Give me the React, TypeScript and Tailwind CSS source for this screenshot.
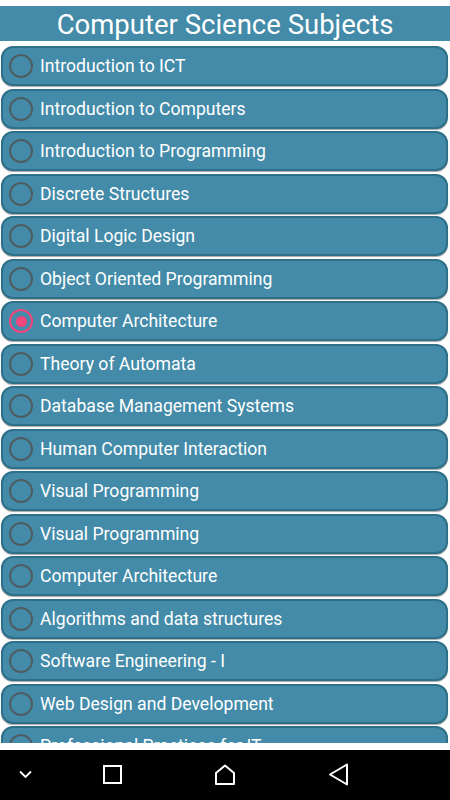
import { useState } from "react";

const subjects = [
  "Introduction to ICT",
  "Introduction to Computers",
  "Introduction to Programming",
  "Discrete Structures",
  "Digital Logic Design",
  "Object Oriented Programming",
  "Computer Architecture",
  "Theory of Automata",
  "Database Management Systems",
  "Human Computer Interaction",
  "Visual Programming",
  "Visual Programming",
  "Computer Architecture",
  "Algorithms and data structures",
  "Software Engineering - I",
  "Web Design and Development",
  "Professional Practices for IT",
];

function Radio({ checked }: { checked: boolean }) {
  return (
    <div
      className={`w-[24px] h-[24px] rounded-full border-2 flex items-center justify-center shrink-0 ${
        checked ? "border-[#f2467c]" : "border-[#4e5d62]"
      }`}
    >
      {checked && <div className="w-[11px] h-[11px] rounded-full bg-[#f2467c]" />}
    </div>
  );
}

export default function App() {
  const [selected, setSelected] = useState(6);

  return (
    <div className="w-[450px] h-[800px] bg-white flex flex-col overflow-hidden font-['Roboto',sans-serif]">
      {/* Title bar */}
      <div className="mt-[6px] h-[35px] bg-[#438ba8] flex items-center justify-center shrink-0 pt-[3px]">
        <h1 className="text-white text-[27.5px] leading-none">Computer Science Subjects</h1>
      </div>

      {/* Subject list */}
      <div className="flex-1 overflow-hidden pt-[5px] pr-[2px] pl-[1px] mb-[7px]">
        {subjects.map((s, i) => (
          <button
            key={i}
            type="button"
            onClick={() => setSelected(i)}
            className="w-full h-[40px] mb-[2.5px] flex items-center gap-[7px] pl-[6px] bg-[#438ba8] border-2 border-[#2f7089] rounded-[12px] shadow-[0_1px_1px_rgba(0,0,0,0.35)] text-left"
          >
            <Radio checked={selected === i} />
            <span className="text-white text-[17.6px] leading-none mt-[2px]">{s}</span>
          </button>
        ))}
      </div>

      {/* Android nav bar */}
      <div className="h-[50px] bg-black flex items-center shrink-0 relative">
        <svg className="absolute left-[19px] top-[20px]" width="13" height="9" viewBox="0 0 13 9">
          <path d="M1 1.5 L6.5 7 L12 1.5" fill="none" stroke="white" strokeWidth="1.8" />
        </svg>
        <svg className="absolute left-[103px] top-[15px]" width="19" height="19" viewBox="0 0 19 19">
          <rect x="1" y="1" width="17" height="17" fill="none" stroke="white" strokeWidth="2" />
        </svg>
        <svg className="absolute left-[214px] top-[14px]" width="22" height="21" viewBox="0 0 22 21">
          <path d="M2 20 L2 9 L11 1.5 L20 9 L20 20 Z" fill="none" stroke="white" strokeWidth="2" strokeLinejoin="round" />
        </svg>
        <svg className="absolute left-[328px] top-[13px]" width="21" height="23" viewBox="0 0 21 23">
          <path d="M19 1.5 L19 21.5 L2 11.5 Z" fill="none" stroke="white" strokeWidth="2" strokeLinejoin="round" />
        </svg>
      </div>
    </div>
  );
}
